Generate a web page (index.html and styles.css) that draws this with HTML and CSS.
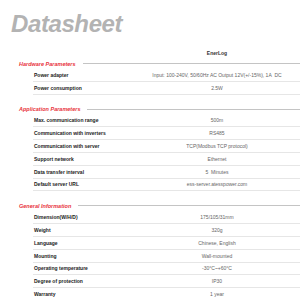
FILE: index.html
```html
<!DOCTYPE html>
<html lang="en">
<head>
    <meta charset="UTF-8">
    <title>Datasheet</title>
    <link rel="stylesheet" href="styles.css">
</head>
<body>
    <div class="sheet">
        <h1 class="title">Datasheet</h1>

        <div class="product-row">
            <span></span>
            <span class="product">EnerLog</span>
        </div>

        <div class="section">
            <h2 class="section-title">Hardware Parameters</h2>
            <div class="row"><span class="label">Power adapter</span><span class="value">Input: 100-240V, 50/60Hz AC Output 12V(+/-15%), 1A&nbsp; DC</span></div>
            <div class="row"><span class="label">Power consumption</span><span class="value">2.5W</span></div>
        </div>

        <div class="section">
            <h2 class="section-title">Application Parameters</h2>
            <div class="row"><span class="label">Max. communication range</span><span class="value">500m</span></div>
            <div class="row"><span class="label">Communication with inverters</span><span class="value">RS485</span></div>
            <div class="row"><span class="label">Communication with server</span><span class="value">TCP(Modbus TCP protocol)</span></div>
            <div class="row"><span class="label">Support network</span><span class="value">Ethernet</span></div>
            <div class="row"><span class="label">Data transfer interval</span><span class="value">5&nbsp; Minutes</span></div>
            <div class="row"><span class="label">Default server URL</span><span class="value">ess-server.atesspower.com</span></div>
        </div>

        <div class="section">
            <h2 class="section-title">General Information</h2>
            <div class="row"><span class="label">Dimension(W/H/D)</span><span class="value">175/105/31mm</span></div>
            <div class="row"><span class="label">Weight</span><span class="value">320g</span></div>
            <div class="row"><span class="label">Language</span><span class="value">Chinese, English</span></div>
            <div class="row"><span class="label">Mounting</span><span class="value">Wall-mounted</span></div>
            <div class="row"><span class="label">Operating temperature</span><span class="value">-30°C~+60°C</span></div>
            <div class="row"><span class="label">Degree of protection</span><span class="value">IP30</span></div>
            <div class="row"><span class="label">Warranty</span><span class="value">1 year</span></div>
        </div>
    </div>
</body>
</html>
```

FILE: styles.css
```css
body {
    margin: 0;
    padding: 0;
    background-color: #ffffff;
    font-family: "Liberation Sans", Arial, sans-serif;
    overflow: hidden;
}
.sheet {
    width: 300px;
}
.title {
    margin: 0;
    padding: 11px 0 0 11px;
    font-size: 24px;
    line-height: 26px;
    font-weight: bold;
    font-style: italic;
    letter-spacing: -0.4px;
    color: #b3b3b3;
}
.product-row {
    display: grid;
    grid-template-columns: 134px 1fr;
    height: 11px;
    margin-top: 10px;
    align-items: center;
}
.product {
    text-align: center;
    font-size: 5px;
    font-weight: bold;
    color: #333;
}
.section + .section {
    margin-top: 9px;
}
.section-title {
    display: flex;
    align-items: center;
    height: 11px;
    margin: 0;
    padding-left: 19px;
    font-size: 5.5px;
    font-weight: bold;
    font-style: italic;
    color: #e8323c;
}
.section-title::after {
    content: "";
    flex: 1;
    margin-left: 7px;
    border-top: 1px solid #c4c4c4;
}
.row {
    display: grid;
    grid-template-columns: 101px 1fr;
    align-items: center;
    height: 11.8px;
    margin-left: 33px;
    border-bottom: 1px solid #e6e6e6;
    font-size: 5px;
}
.label {
    padding-left: 1px;
    font-weight: bold;
    color: #222;
}
.value {
    text-align: center;
    color: #666;
}
```
